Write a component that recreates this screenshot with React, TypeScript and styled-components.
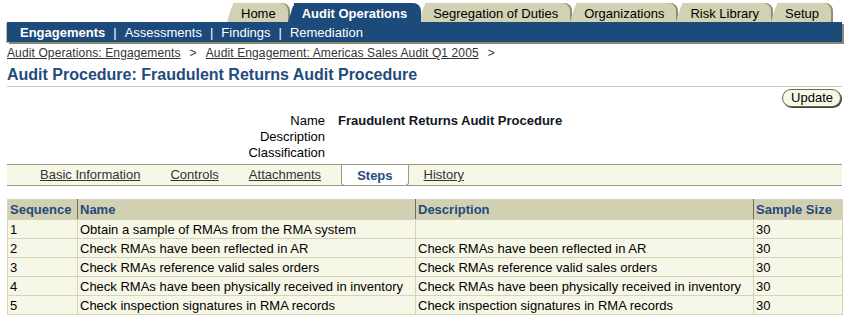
import styled, { createGlobalStyle } from "styled-components";

const BLUE = "#1c4a7b";
const INK = "#1f4b7c";
const TAN = "#d3d1b3";
const CREAM = "#f7f7e7";
const OLIVE = "#9b9a7c";
const GRID = "#d5d4ba";

const GlobalStyle = createGlobalStyle`
  body {
    margin: 0;
    background: #ffffff;
    font-family: "Liberation Sans", Arial, sans-serif;
    font-size: 13px;
    color: #000000;
  }
`;

const Page = styled.div`
  padding: 3px 7px 0;
`;

const TabStrip = styled.div`
  display: flex;
  justify-content: flex-end;
  padding-right: 9px;
  height: 19px;
`;

const GlobalTab = styled.div<{ $active?: boolean; $z: number }>`
  position: relative;
  z-index: ${(p) => (p.$active ? 20 : p.$z)};
  margin-left: -2px;
  padding: 0 14px;
  height: 19px;
  line-height: 21px;
  white-space: nowrap;
  color: ${(p) => (p.$active ? "#ffffff" : "#000000")};
  font-weight: ${(p) => (p.$active ? "bold" : "normal")};

  &::before {
    content: "";
    position: absolute;
    z-index: -1;
    left: 0;
    top: 0;
    bottom: 0;
    width: 14px;
    background: ${(p) => (p.$active ? BLUE : TAN)};
    border-top-left-radius: 5px;
    transform: skewX(-17deg);
    transform-origin: 0 100%;
  }

  &::after {
    content: "";
    position: absolute;
    z-index: -1;
    left: 6px;
    right: 0;
    top: 0;
    bottom: 0;
    background: ${(p) => (p.$active ? BLUE : TAN)};
    border-top-right-radius: 8px;
    box-shadow: ${(p) => (p.$active ? "none" : "inset -2px 0 0 #8f8e70")};
  }
`;

const NavBar = styled.div`
  display: flex;
  align-items: center;
  height: 20px;
  padding-left: 13px;
  background: ${BLUE};
  color: #ffffff;
  box-shadow: 2px 2px 0 #8b8a6b, -1px 1px 0 #c2c1a3;
`;

const NavItem = styled.span<{ $current?: boolean }>`
  font-weight: ${(p) => (p.$current ? "bold" : "normal")};
`;

const NavSep = styled.span`
  margin: 0 8px;
`;

const Crumbs = styled.div`
  margin-top: 4px;
  font-size: 12px;
  line-height: 14px;
  letter-spacing: 0.12px;
  color: #333333;
`;

const CrumbLink = styled.a`
  color: #333333;
  text-decoration: underline;
`;

const CrumbSep = styled.span`
  margin: 0 9px;
`;

const Title = styled.h1`
  margin: 5px 0 0;
  padding-bottom: 1px;
  font-size: 16px;
  line-height: 20px;
  font-weight: bold;
  color: ${INK};
  border-bottom: 1px solid #cdccad;
`;

const ButtonRow = styled.div`
  display: flex;
  justify-content: flex-end;
  margin-top: 2px;
  padding-right: 1px;
`;

const PillButton = styled.button`
  height: 18px;
  padding: 0 7px 0 8px;
  font-family: "Liberation Sans", Arial, sans-serif;
  font-size: 13px;
  line-height: 16px;
  color: #000000;
  background: ${CREAM};
  border: 1px solid #6a6a58;
  border-radius: 9px;
  box-shadow: 1px 1px 0 #3e3e30;
`;

const Fields = styled.dl`
  display: grid;
  grid-template-columns: 318px 1fr;
  column-gap: 13px;
  margin: 6px 0 0;
  line-height: 16px;
`;

const Label = styled.dt`
  margin: 0;
  text-align: right;
`;

const Value = styled.dd`
  margin: 0;
  font-weight: bold;
  color: #0e1626;
`;

const SubTabBar = styled.div`
  display: flex;
  margin-top: 3px;
  height: 20px;
  padding-left: 18px;
  background: ${CREAM};
  border-top: 1px solid ${OLIVE};
  border-bottom: 1px solid ${OLIVE};
`;

const SubTab = styled.a`
  padding: 0 15px;
  line-height: 20px;
  color: #333333;
  text-decoration: underline;
`;

const SubTabCurrent = styled.span`
  margin: 0 0 -1px 5px;
  padding: 0 15px;
  line-height: 21px;
  background: #ffffff;
  border: 1px solid ${OLIVE};
  border-top: none;
  border-radius: 0 0 4px 4px;
  font-weight: bold;
  color: ${INK};
`;

const Table = styled.table`
  width: 100%;
  margin-top: 13px;
  table-layout: fixed;
  border-collapse: collapse;
  border: 1px solid ${GRID};
  font-size: 13px;
`;

const Col = styled.col<{ $w: number }>`
  width: ${(p) => p.$w}px;
`;

const HeadCell = styled.th`
  height: 19px;
  padding: 0 2px;
  text-align: left;
  background: #d1d0b2;
  color: ${INK};
  font-weight: bold;
  white-space: nowrap;
  border-left: 1px solid #6f6e58;
  border-bottom: 1px solid ${GRID};

  &:first-child {
    border-left-color: ${GRID};
  }
`;

const Cell = styled.td`
  height: 18px;
  padding: 0 2px;
  background: ${CREAM};
  border: 1px solid ${GRID};
  white-space: nowrap;
  overflow: hidden;
`;

const tabs = [
  "Home",
  "Audit Operations",
  "Segregation of Duties",
  "Organizations",
  "Risk Library",
  "Setup",
];

const steps = [
  { seq: 1, name: "Obtain a sample of RMAs from the RMA system", desc: "", size: 30 },
  { seq: 2, name: "Check RMAs have been reflected in AR", desc: "Check RMAs have been reflected in AR", size: 30 },
  { seq: 3, name: "Check RMAs reference valid sales orders", desc: "Check RMAs reference valid sales orders", size: 30 },
  {
    seq: 4,
    name: "Check RMAs have been physically received in inventory",
    desc: "Check RMAs have been physically received in inventory",
    size: 30,
  },
  { seq: 5, name: "Check inspection signatures in RMA records", desc: "Check inspection signatures in RMA records", size: 30 },
];

export default function App() {
  return (
    <Page>
      <GlobalStyle />
      <TabStrip>
        {tabs.map((t, i) => (
          <GlobalTab key={t} $z={i + 1} $active={t === "Audit Operations"}>
            {t}
          </GlobalTab>
        ))}
      </TabStrip>
      <NavBar>
        <NavItem $current>Engagements</NavItem>
        <NavSep>|</NavSep>
        <NavItem>Assessments</NavItem>
        <NavSep>|</NavSep>
        <NavItem>Findings</NavItem>
        <NavSep>|</NavSep>
        <NavItem>Remediation</NavItem>
      </NavBar>

      <Crumbs>
        <CrumbLink>Audit Operations: Engagements</CrumbLink>
        <CrumbSep>&gt;</CrumbSep>
        <CrumbLink>Audit Engagement: Americas Sales Audit Q1 2005</CrumbLink>
        <CrumbSep>&gt;</CrumbSep>
      </Crumbs>

      <Title>Audit Procedure: Fraudulent Returns Audit Procedure</Title>

      <ButtonRow>
        <PillButton>Update</PillButton>
      </ButtonRow>

      <Fields>
        <Label>Name</Label>
        <Value>Fraudulent Returns Audit Procedure</Value>
        <Label>Description</Label>
        <Value />
        <Label>Classification</Label>
        <Value />
      </Fields>

      <SubTabBar>
        <SubTab>Basic Information</SubTab>
        <SubTab>Controls</SubTab>
        <SubTab>Attachments</SubTab>
        <SubTabCurrent>Steps</SubTabCurrent>
        <SubTab>History</SubTab>
      </SubTabBar>

      <Table>
        <colgroup>
          <Col $w={70} />
          <Col $w={338} />
          <Col $w={338} />
          <Col $w={89} />
        </colgroup>
        <thead>
          <tr>
            <HeadCell>Sequence</HeadCell>
            <HeadCell>Name</HeadCell>
            <HeadCell>Description</HeadCell>
            <HeadCell>Sample Size</HeadCell>
          </tr>
        </thead>
        <tbody>
          {steps.map((s) => (
            <tr key={s.seq}>
              <Cell>{s.seq}</Cell>
              <Cell>{s.name}</Cell>
              <Cell>{s.desc}</Cell>
              <Cell>{s.size}</Cell>
            </tr>
          ))}
        </tbody>
      </Table>
    </Page>
  );
}
